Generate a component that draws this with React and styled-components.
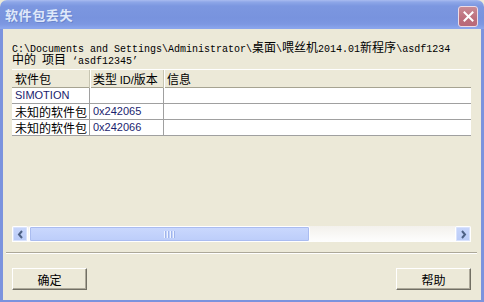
import styled, { createGlobalStyle } from "styled-components";

const GlobalStyle = createGlobalStyle`
  html, body {
    margin: 0;
    padding: 0;
    background: #ffffff;
  }
  * {
    box-sizing: border-box;
  }
`;

const cjk = `"Noto Sans CJK SC", "Liberation Sans", sans-serif`;

const rows = [
  { name: "SIMOTION", latinName: true, type: "", info: "" },
  { name: "未知的软件包", type: "0x242065", info: "" },
  { name: "未知的软件包", type: "0x242066", info: "" },
];

export default function App() {
  return (
    <>
      <GlobalStyle />
      <Window>
        <TitleBar>
          <Title>软件包丢失</Title>
          <CloseButton aria-label="close">
            <svg width="11" height="11" viewBox="0 0 11 11">
              <path d="M1.5 1.5 L9.5 9.5 M9.5 1.5 L1.5 9.5" stroke="#fff" strokeWidth="2" strokeLinecap="square" />
            </svg>
          </CloseButton>
        </TitleBar>

        <Body>
          <PathText>
            <PathLine>
              C:\Documents and Settings\Administrator\<Wide>桌面</Wide>\<Wide>喂丝机</Wide>2014.01<Wide>新程序</Wide>\asdf1234
            </PathLine>
            <PathLine>
              <Wide>中的</Wide> <Wide>项目</Wide> ‘asdf12345’
            </PathLine>
          </PathText>

          <ListView>
            <HeaderRow>
              <HeaderCell>软件包</HeaderCell>
              <HeaderCell>
                类型 <Latin>ID/</Latin>版本
              </HeaderCell>
              <HeaderCell $last>信息</HeaderCell>
            </HeaderRow>
            {rows.map((r, i) => (
              <Row key={i}>
                <Cell $latin={r.latinName}>{r.name}</Cell>
                <Cell $latin>{r.type}</Cell>
                <Cell $last>{r.info}</Cell>
              </Row>
            ))}
            <Spacer />
            <ScrollBar>
              <ArrowButton>
                <svg width="7" height="9" viewBox="0 0 7 9">
                  <path d="M5 1 L2 4.5 L5 8" stroke="#4d6185" strokeWidth="2" fill="none" />
                </svg>
              </ArrowButton>
              <Thumb>
                <Grip>
                  <i />
                  <i />
                  <i />
                  <i />
                </Grip>
              </Thumb>
              <Track />
              <ArrowButton>
                <svg width="7" height="9" viewBox="0 0 7 9">
                  <path d="M2 1 L5 4.5 L2 8" stroke="#4d6185" strokeWidth="2" fill="none" />
                </svg>
              </ArrowButton>
            </ScrollBar>
          </ListView>

          <Separator />

          <ButtonRow>
            <DialogButton>确定</DialogButton>
            <DialogButton>帮助</DialogButton>
          </ButtonRow>
        </Body>
      </Window>
    </>
  );
}

const Window = styled.div`
  width: 100%;
  height: 302px;
  display: flex;
  flex-direction: column;
  background: #ece9d8;
`;

const TitleBar = styled.div`
  height: 29px;
  flex-shrink: 0;
  display: flex;
  align-items: center;
  justify-content: space-between;
  padding: 0 6px 0 5px;
  border-radius: 7px 7px 0 0;
  background: linear-gradient(
    to bottom,
    #a9bcf0 0px,
    #8ea7e8 2px,
    #7c97e0 6px,
    #7893de 18px,
    #7c97e1 24px,
    #8aa5ec 28px,
    #8aa5ec 29px
  );
`;

const Title = styled.span`
  font-family: ${cjk};
  font-size: 13px;
  font-weight: bold;
  letter-spacing: 0.6px;
  color: #dfe8fa;
  text-shadow: 1px 1px 0 #6a84cc;
`;

const CloseButton = styled.div`
  width: 20px;
  height: 21px;
  margin-top: 3px;
  border-radius: 3px;
  border: 1px solid #eddbe6;
  background: linear-gradient(to bottom, #c98b95, #bd6f7c 60%, #b8697a);
  display: flex;
  align-items: center;
  justify-content: center;
`;

const Body = styled.div`
  flex: 1;
  display: flex;
  flex-direction: column;
  border: 3px solid #7b93de;
  border-top: none;
  padding: 12px 10px 10px 9px;
`;

const PathText = styled.div`
  font-family: "Liberation Mono", monospace;
  font-size: 10px;
  color: #000;
  white-space: nowrap;
`;

const PathLine = styled.div`
  height: 12px;
  line-height: 12px;
`;

const Wide = styled.span`
  display: inline-block;
  height: 12px;
  font-family: ${cjk};
  font-size: 12px;
  line-height: 12px;
`;

const Latin = styled.span`
  font-family: "Liberation Sans", sans-serif;
  font-size: 11px;
`;

const ListView = styled.div`
  margin-top: 4px;
  height: 173px;
  display: flex;
  flex-direction: column;
`;

const columns = `78px 74px 1fr`;

const HeaderRow = styled.div`
  display: grid;
  grid-template-columns: ${columns};
  height: 19px;
  border-top: 1px solid #ffffff;
  border-bottom: 1px solid #a6a391;
`;

const HeaderCell = styled.div`
  font-family: ${cjk};
  font-size: 12px;
  line-height: 17px;
  padding-left: 3px;
  color: #000;
  border-right: ${(p) => (p.$last ? "none" : "1px solid #c7c5b2")};
  box-shadow: ${(p) => (p.$last ? "none" : "1px 0 0 #ffffff")};
  white-space: nowrap;
`;

const Row = styled.div`
  display: grid;
  grid-template-columns: ${columns};
  height: 16px;
  background: #ffffff;
  border-bottom: 1px solid #a0a0a0;
`;

const Cell = styled.div`
  font-family: ${(p) => (p.$latin ? `"Liberation Sans", sans-serif` : cjk)};
  font-size: ${(p) => (p.$latin ? "11px" : "12px")};
  line-height: 15px;
  color: ${(p) => (p.$latin ? "#1a1d6e" : "#000")};
  padding-left: 3px;
  border-right: ${(p) => (p.$last ? "none" : "1px solid #a0a0a0")};
  white-space: nowrap;
  overflow: hidden;
`;

const Spacer = styled.div`
  flex: 1;
`;

const ScrollBar = styled.div`
  height: 16px;
  flex-shrink: 0;
  display: flex;
  align-items: stretch;
  background: linear-gradient(to bottom, #f3f1ec, #fefefe);
`;

const ArrowButton = styled.div`
  width: 16px;
  border: 1px solid #ffffff;
  border-radius: 2px;
  background: linear-gradient(to bottom, #c8d6fb, #b9cbf7);
  display: flex;
  align-items: center;
  justify-content: center;
  box-shadow: inset 0 0 0 1px #d8e2fd;
`;

const Thumb = styled.div`
  width: 281px;
  margin-left: 1px;
  border: 1px solid #ffffff;
  border-radius: 2px;
  background: linear-gradient(to bottom, #cad8fd, #bccdfa);
  box-shadow: inset 0 0 0 1px #aabcf0;
  display: flex;
  align-items: center;
  justify-content: center;
`;

const Grip = styled.div`
  display: flex;
  gap: 1px;
  i {
    display: block;
    width: 1px;
    height: 7px;
    background: #eef3fe;
    box-shadow: 1px 0 0 #9fb4ec;
    margin-right: 1px;
  }
`;

const Track = styled.div`
  flex: 1;
`;

const Separator = styled.div`
  margin: 10px -6px 0 -6px;
  height: 2px;
  flex-shrink: 0;
  border-top: 1px solid #aca899;
  border-bottom: 1px solid #ffffff;
`;

const ButtonRow = styled.div`
  margin-top: 14px;
  display: flex;
  justify-content: space-between;
`;

const DialogButton = styled.button`
  width: 75px;
  height: 22px;
  padding: 0;
  background: #ece9d8;
  border: none;
  border-top: 1px solid #ffffff;
  border-left: 1px solid #ffffff;
  border-right: 1px solid #716f64;
  border-bottom: 1px solid #716f64;
  box-shadow: inset -1px -1px 0 #aca899;
  font-family: ${cjk};
  font-size: 12px;
  color: #000;
`;
